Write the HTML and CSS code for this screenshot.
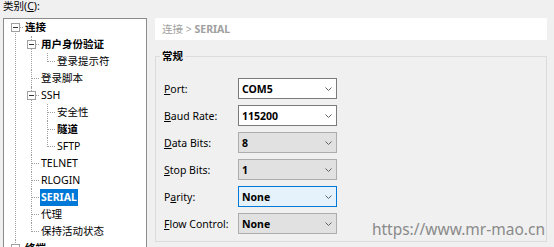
FILE: index.html
```html
<!DOCTYPE html>
<html lang="zh-CN">
<head>
	<meta charset="UTF-8">
	<title>会话选项 - SERIAL</title>
	<link rel="stylesheet" href="styles.css">
</head>
<body>
	<div class="caption">类别(<u>C</u>):</div>
	<div class="main">
		<div class="tree">
			<ul>
				<li><div class="row b"><i class="exp"></i><span>连接</span></div>
					<ul>
						<li><div class="row b"><i class="exp"></i><span>用户身份验证</span></div>
							<ul>
								<li><div class="row"><span>登录提示符</span></div></li>
							</ul>
						</li>
						<li><div class="row"><span>登录脚本</span></div></li>
						<li><div class="row"><i class="exp"></i><span>SSH</span></div>
							<ul>
								<li><div class="row"><span>安全性</span></div></li>
								<li><div class="row b"><span>隧道</span></div></li>
								<li><div class="row"><span>SFTP</span></div></li>
							</ul>
						</li>
						<li><div class="row"><span>TELNET</span></div></li>
						<li><div class="row"><span>RLOGIN</span></div></li>
						<li><div class="row b"><span class="sel">SERIAL</span></div></li>
						<li><div class="row"><span>代理</span></div></li>
						<li><div class="row"><span>保持活动状态</span></div></li>
					</ul>
				</li>
				<li><div class="row b"><i class="exp"></i><span>终端</span></div></li>
			</ul>
		</div>
		<div class="panel">
			<div class="crumb">连接 &gt; <b>SERIAL</b></div>
			<fieldset class="group">
				<legend>常规</legend>
				<div class="fields">
					<div class="field">
						<label><u>P</u>ort:</label>
						<div class="combo edit"><span>COM5</span><svg width="7" height="4" viewBox="0 0 7 4"><path d="M0.5 0.5L3.5 3.5L6.5 0.5" fill="none" stroke="#606060"/></svg></div>
					</div>
					<div class="field">
						<label><u>B</u>aud Rate:</label>
						<div class="combo edit"><span>115200</span><svg width="7" height="4" viewBox="0 0 7 4"><path d="M0.5 0.5L3.5 3.5L6.5 0.5" fill="none" stroke="#606060"/></svg></div>
					</div>
					<div class="field">
						<label><u>D</u>ata Bits:</label>
						<div class="combo"><span>8</span><svg width="7" height="4" viewBox="0 0 7 4"><path d="M0.5 0.5L3.5 3.5L6.5 0.5" fill="none" stroke="#606060"/></svg></div>
					</div>
					<div class="field">
						<label><u>S</u>top Bits:</label>
						<div class="combo"><span>1</span><svg width="7" height="4" viewBox="0 0 7 4"><path d="M0.5 0.5L3.5 3.5L6.5 0.5" fill="none" stroke="#606060"/></svg></div>
					</div>
					<div class="field">
						<label>P<u>a</u>rity:</label>
						<div class="combo hot"><span>None</span><svg width="7" height="4" viewBox="0 0 7 4"><path d="M0.5 0.5L3.5 3.5L6.5 0.5" fill="none" stroke="#606060"/></svg></div>
					</div>
					<div class="field">
						<label><u>F</u>low Control:</label>
						<div class="combo"><span>None</span><svg width="7" height="4" viewBox="0 0 7 4"><path d="M0.5 0.5L3.5 3.5L6.5 0.5" fill="none" stroke="#606060"/></svg></div>
					</div>
				</div>
			</fieldset>
		</div>
	</div>
	<div class="mark">https://www.mr-mao.cn</div>
</body>
</html>
```
FILE: styles.css
```css
* {
	margin: 0;
	padding: 0;
	box-sizing: border-box;
	list-style: none;
}
body {
	width: 554px;
	height: 247px;
	overflow: hidden;
	background-color: #f0f0f0;
	font: 10.5px "Noto Sans", "Noto Sans CJK SC", sans-serif;
	color: #000;
	position: relative;
}
.caption {
	height: 18px;
	line-height: 12px;
	padding-left: 3px;
}
.main {
	display: flex;
	gap: 8px;
	padding-left: 3px;
}

/* tree */
.tree {
	width: 144px;
	height: 240px;
	background-color: #fff;
	border: 1px solid #8c8c8c;
	overflow: hidden;
}
.tree ul ul {
	padding-left: 16px;
}
.tree li {
	position: relative;
}
.tree li::before {
	content: "";
	position: absolute;
	left: 11px;
	top: 0;
	bottom: 0;
	border-left: 1px dotted #a0a0a0;
}
.tree li:last-child::before {
	bottom: auto;
	height: 9px;
}
.tree > ul > li:first-child::before {
	top: 9px;
}
.row {
	position: relative;
	height: 17px;
	line-height: 17px;
	padding-left: 20px;
	white-space: nowrap;
}
.row::before {
	content: "";
	position: absolute;
	left: 12px;
	top: 8px;
	width: 7px;
	border-top: 1px dotted #a0a0a0;
}
.row span {
	display: inline-block;
	padding: 0 1px;
	height: 17px;
}
.row.b {
	font-weight: bold;
}
.row .sel {
	background-color: #0078d7;
	color: #fff;
}
.exp {
	position: absolute;
	left: 7px;
	top: 4px;
	width: 9px;
	height: 9px;
	border: 1px solid #a0a0a0;
	background-color: #fff;
	z-index: 1;
}
.exp::after {
	content: "";
	position: absolute;
	left: 1px;
	top: 3px;
	width: 5px;
	height: 1px;
	background-color: #333;
}

/* right side */
.panel {
	width: 392px;
	display: flex;
	flex-direction: column;
}
.crumb {
	height: 22px;
	line-height: 22px;
	padding-left: 7px;
	background-color: #fff;
	color: #a0a0a0;
}
.group {
	margin-top: 9px;
	height: 193px;
	border: 1px solid #dcdcdc;
	padding: 0 0 0 8px;
}
.group legend {
	margin-left: -4px;
	padding: 0 2px;
	line-height: 14px;
	font-weight: bold;
}
.fields {
	padding-top: 15px;
	display: flex;
	flex-direction: column;
	gap: 6px;
}
.field {
	display: flex;
	align-items: center;
	height: 21px;
}
.field label {
	width: 74px;
}
.combo {
	width: 99px;
	height: 21px;
	display: flex;
	align-items: center;
	justify-content: space-between;
	padding: 0 4px 0 3px;
	border: 1px solid #adadad;
	background-color: #e1e1e1;
	font-weight: bold;
}
.combo.edit {
	border-color: #7a7a7a;
	background-color: #fff;
}
.combo.hot {
	border-color: #0078d7;
	background-color: #e5f1fb;
}

.mark {
	position: absolute;
	right: 9px;
	bottom: 7px;
	line-height: 16px;
	font: 15.5px "Noto Sans", sans-serif;
	color: #8a8a8a;
}
```
